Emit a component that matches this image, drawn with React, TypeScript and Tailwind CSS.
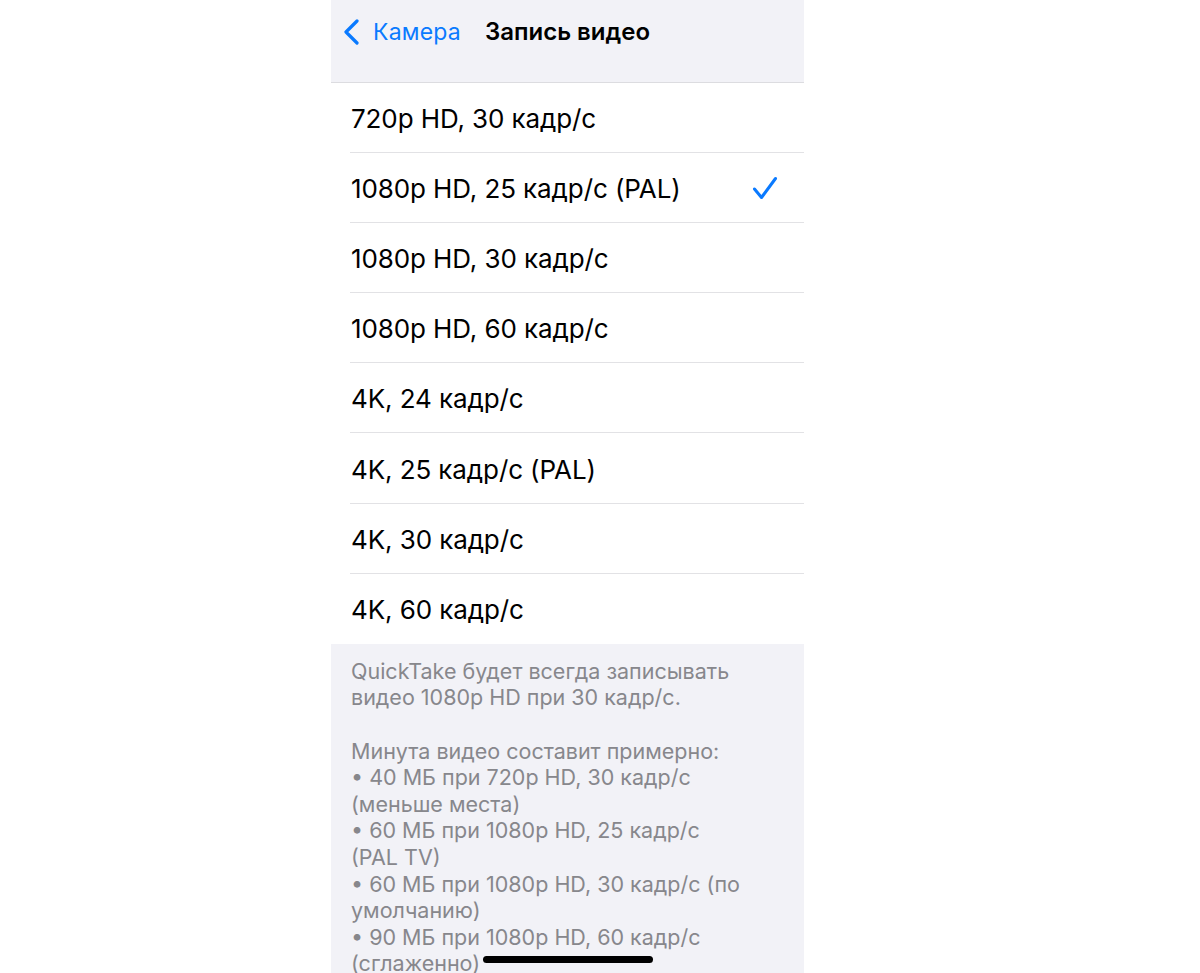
import React from 'react';

const options = [
  '720p HD, 30 кадр/с',
  '1080p HD, 25 кадр/с (PAL)',
  '1080p HD, 30 кадр/с',
  '1080p HD, 60 кадр/с',
  '4K, 24 кадр/с',
  '4K, 25 кадр/с (PAL)',
  '4K, 30 кадр/с',
  '4K, 60 кадр/с',
];

const selected = 1;

const footerLines = [
  'QuickTake будет всегда записывать',
  'видео 1080p HD при 30 кадр/с.',
  '',
  'Минута видео составит примерно:',
  '• 40 МБ при 720p HD, 30 кадр/с',
  '(меньше места)',
  '• 60 МБ при 1080p HD, 25 кадр/с',
  '(PAL TV)',
  '• 60 МБ при 1080p HD, 30 кадр/с (по',
  'умолчанию)',
  '• 90 МБ при 1080p HD, 60 кадр/с',
  '(сглаженно)',
];

export default function App() {
  return (
    <div className="w-[1200px] h-[973px] bg-white overflow-hidden" style={{ fontFamily: 'Inter, "Noto Sans", sans-serif' }}>
      <div className="relative ml-[331px] w-[473px] h-[973px] bg-[#f2f2f7] overflow-hidden">
        {/* nav bar */}
        <div className="h-[83px] border-b border-[#dcdce0] flex items-start pt-[17px]">
          <div className="flex items-center h-[30px]">
            <svg width="17" height="26" viewBox="0 0 17 26" className="ml-[12px]">
              <path d="M14 2 L3 13 L14 24" fill="none" stroke="#0a7aff" strokeWidth="3.2" strokeLinecap="round" strokeLinejoin="round" />
            </svg>
            <span className="ml-[13px] text-[23px] text-[#0a7aff] tracking-[0.2px]">Камера</span>
            <span className="ml-[24px] text-[24px] font-semibold text-black">Запись видео</span>
          </div>
        </div>

        {/* list */}
        <div className="bg-white">
          {options.map((opt, i) => (
            <div key={opt} className="pl-[19px]">
              <div
                className={
                  'h-[70.1px] flex items-center justify-between pr-[26px] ' +
                  (i < options.length - 1 ? 'border-b border-[#e2e2e5]' : '')
                }
              >
                <span className="pl-[1px] pt-[2px] text-[26px] text-black tracking-[-0.1px]">{opt}</span>
                {i === selected && (
                  <svg width="26" height="24" viewBox="0 0 26 24">
                    <path d="M2.5 13 L9.5 21.5 L23.5 2.5" fill="none" stroke="#0a7aff" strokeWidth="3" strokeLinecap="round" strokeLinejoin="round" />
                  </svg>
                )}
              </div>
            </div>
          ))}
        </div>

        {/* footer */}
        <div className="pl-[20px] pt-[14px] text-[21.5px] leading-[26.6px] text-[#87878c]">
          {footerLines.map((l, i) => (
            <div key={i} className="whitespace-nowrap h-[26.6px]">
              {l}
            </div>
          ))}
        </div>

        {/* home indicator */}
        <div className="absolute left-[152px] top-[956px] w-[170px] h-[7px] rounded-full bg-black" />
      </div>
    </div>
  );
}
